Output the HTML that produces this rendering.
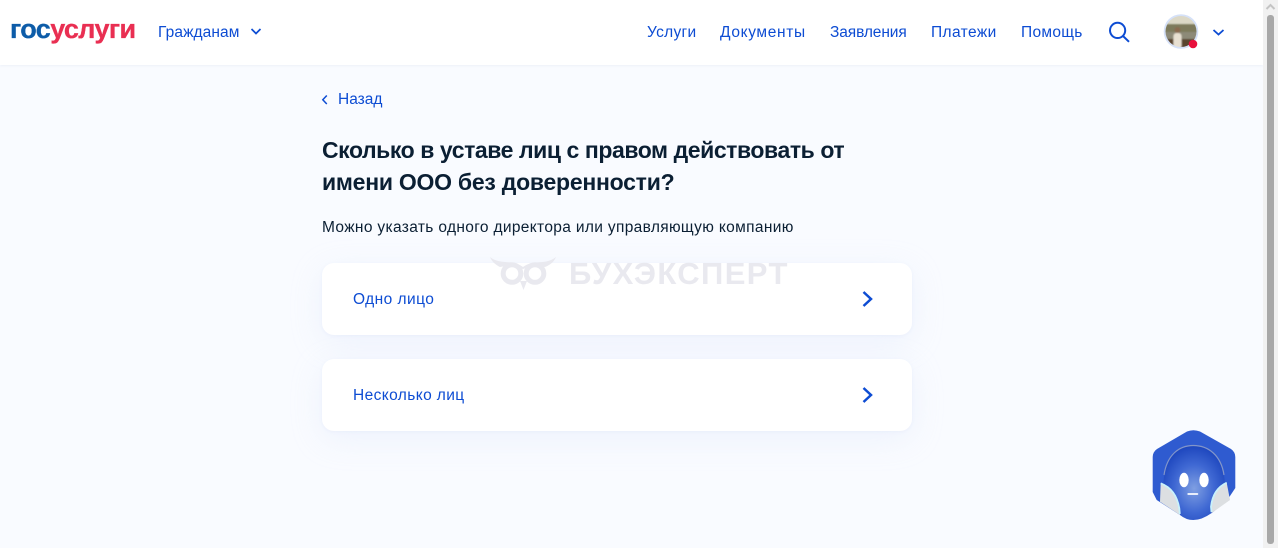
<!DOCTYPE html>
<html lang="ru">
<head>
<meta charset="utf-8">
<style>
html,body{margin:0;padding:0;width:1278px;height:548px;overflow:hidden;background:#f9fbff;font-family:"Liberation Sans",sans-serif;}
.t{position:absolute;white-space:nowrap;line-height:20px;color:#0d4cd3;font-size:15.5px;}
.hdr{position:absolute;left:0;top:0;width:1263px;height:65px;background:#fff;box-shadow:0 1px 2px rgba(230,235,245,.6);}
.card{position:absolute;left:322px;width:590px;height:72px;background:#fff;border-radius:12px;box-shadow:0 8px 32px rgba(200,215,245,.22),0 1px 3px rgba(220,228,245,.3);}
</style>
</head>
<body>
<div class="hdr"></div>

<div class="t" style="left:10px;top:16px;font-size:27px;font-weight:bold;line-height:26px;letter-spacing:-.62px;color:#0d5ca8;-webkit-text-stroke:.3px currentColor;">гос<span style="color:#e92f52;">услуги</span></div>
<div class="t" style="left:158px;top:23px;letter-spacing:.1px;">Гражданам</div>
<svg style="position:absolute;left:250px;top:27px" width="12" height="9" viewBox="0 0 12 9"><path d="M1.500 2 L6 6.500 L10.500 2" fill="none" stroke="#0d4cd3" stroke-width="1.700"/></svg>

<div class="t" style="left:647px;top:23px;letter-spacing:.3px;">Услуги</div>
<div class="t" style="left:720px;top:23px;letter-spacing:.65px;">Документы</div>
<div class="t" style="left:830px;top:23px;letter-spacing:-.1px;">Заявления</div>
<div class="t" style="left:931px;top:23px;letter-spacing:.4px;">Платежи</div>
<div class="t" style="left:1021px;top:23px;letter-spacing:.3px;">Помощь</div>

<svg style="position:absolute;left:1108px;top:21px" width="23" height="22" viewBox="0 0 23 22"><circle cx="9.600" cy="9.400" r="7.600" fill="none" stroke="#0d4cd3" stroke-width="2"/><path d="M15 15 L21 20.800" stroke="#0d4cd3" stroke-width="2" fill="none"/></svg>

<svg style="position:absolute;left:1163px;top:13px" width="38" height="38" viewBox="0 0 38 38">
<defs><clipPath id="c"><circle cx="18" cy="18.500" r="15.500"/></clipPath><filter id="b"><feGaussianBlur stdDeviation=".8"/></filter></defs>
<circle cx="18" cy="18.500" r="17.300" fill="#d5e1f8"/>
<g clip-path="url(#c)"><g filter="url(#b)">
<rect x="0" y="0" width="38" height="13" fill="#dcd8c6"/>
<rect x="0" y="11" width="38" height="9" fill="#7d7a5c"/>
<rect x="0" y="19" width="38" height="8" fill="#8d8a78"/>
<rect x="0" y="26" width="38" height="12" fill="#5a452f"/>
<rect x="10.500" y="20" width="8" height="16" rx="3" fill="#e8e0d2"/>
<circle cx="14.500" cy="17" r="3" fill="#8a6a50"/>
</g></g>
<circle cx="30" cy="31" r="4.300" fill="#e8103c"/>
</svg>
<svg style="position:absolute;left:1212px;top:28px" width="13" height="9" viewBox="0 0 13 9"><path d="M1.500 2 L6.500 6.500 L11.500 2" fill="none" stroke="#0d4cd3" stroke-width="1.800"/></svg>

<svg style="position:absolute;left:321px;top:94px" width="8" height="12" viewBox="0 0 8 12"><path d="M5.800 1.500 L1.800 5.800 L5.800 10" fill="none" stroke="#0d4cd3" stroke-width="1.500"/></svg>
<div class="t" style="left:338px;top:90px;">Назад</div>

<div class="t" style="left:322px;top:134px;font-size:23px;font-weight:bold;line-height:32px;color:#0b1f33;letter-spacing:-.43px;">Сколько в уставе лиц с правом действовать от<br><span style="letter-spacing:-.25px;">имени ООО без доверенности?</span></div>
<div class="t" style="left:322px;top:218px;color:#0b1f33;letter-spacing:.34px;">Можно указать одного директора или управляющую компанию</div>

<div class="card" style="top:263px;"></div>
<div class="card" style="top:359px;"></div>

<svg style="position:absolute;left:490px;top:256px" width="68" height="36" viewBox="0 0 68 36">
<path d="M0 1 C6 6 14 6 22 6.500 C27 7 30 9 33 11 C36 9 39 7 45 6.500 C53 6 60 6 66 1 C64 6 60 9 55 11 L45 9 L33 13 L21 9 L10 11 C6 9 2 6 0 1Z" fill="#e9e9ef"/>
<circle cx="22" cy="17.500" r="8.800" fill="none" stroke="#e9e9ef" stroke-width="5"/>
<circle cx="45" cy="17.500" r="8.800" fill="none" stroke="#e9e9ef" stroke-width="5"/>
<path d="M30 25 L37 25 L33.500 34Z" fill="#e9e9ef"/>
</svg>
<div class="t" style="left:569px;top:257px;font-size:31px;line-height:34px;font-weight:bold;color:#e9e9ef;letter-spacing:1.400px;">БУХЭКСПЕРТ</div>

<div class="t" style="left:353px;top:290px;letter-spacing:.45px;">Одно лицо</div>
<svg style="position:absolute;left:860px;top:290px" width="16" height="18" viewBox="0 0 16 18"><path d="M3.500 2 L11 9 L3.500 16" fill="none" stroke="#0d4cd3" stroke-width="2.500"/></svg>
<div class="t" style="left:353px;top:386px;letter-spacing:.4px;">Несколько лиц</div>
<svg style="position:absolute;left:860px;top:386px" width="16" height="18" viewBox="0 0 16 18"><path d="M3.500 2 L11 9 L3.500 16" fill="none" stroke="#0d4cd3" stroke-width="2.500"/></svg>

<svg style="position:absolute;left:1150px;top:429px" width="90" height="94" viewBox="0 0 90 94">
<defs><radialGradient id="r" cx="50%" cy="58%" r="58%"><stop offset="0" stop-color="#7f9fe2"/><stop offset=".55" stop-color="#3f68d3"/><stop offset="1" stop-color="#1c45bd"/></radialGradient></defs>
<path d="M37 2.500 Q43.300 0 50 2.500 L81 20 Q85.300 23 85.300 28 L85.300 59 L78 70 L62 84 L30 86 L6.700 71 L2.700 63 L2.700 28 Q2.700 23 7 20Z" fill="#2f5bd0"/>
<path d="M13.300 56 C14 30 28 16 43.300 16 C60 16 74 30 75 56 L61.700 84 Q43.300 97 30 86Z" fill="url(#r)"/>
<path d="M14 46 C17 26 29 16.500 43.300 16.500 C58 16.500 71 26 74 46" fill="none" stroke="#8295c9" stroke-width="1.200"/>
<path d="M10.700 54.300 Q26 60 29.300 79.300 L30 86 L10 72.700Z" fill="#dcdfe2"/>
<path d="M76.700 53.700 Q63 60 61 77.700 L61.700 84 L80 71Z" fill="#dcdfe2"/>
<path d="M10.700 54.300 Q26 60 29.300 79.300 L29.800 85" fill="none" stroke="#c9f1fb" stroke-width="1.800"/>
<path d="M76.700 53.700 Q63 60 61 77.700 L61.500 83" fill="none" stroke="#c9f1fb" stroke-width="1.800"/>
<ellipse cx="34" cy="51" rx="4.700" ry="7.300" fill="#fff"/>
<ellipse cx="54" cy="51" rx="4.700" ry="7.300" fill="#fff"/>
<rect x="37.300" y="64" width="11" height="2" rx="1" fill="#e8eefb"/>
</svg>

<div style="position:absolute;left:1263px;top:0;width:15px;height:548px;background:#f1f1f1;"></div>
<svg style="position:absolute;left:1265px;top:3px" width="11" height="8" viewBox="0 0 11 8"><path d="M1.500 6 L5.500 2 L9.500 6" fill="none" stroke="#c4c4c4" stroke-width="2"/></svg>
<div style="position:absolute;left:1267px;top:15px;width:7px;height:529px;background:#a8a8a8;border-radius:3px;"></div>
</body>
</html>
